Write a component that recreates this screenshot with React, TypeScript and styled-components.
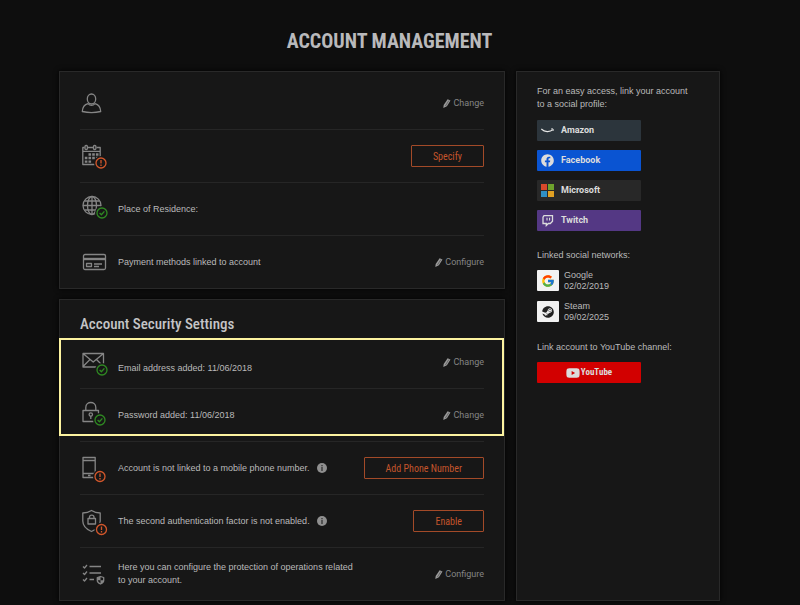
import React from "react";
import styled, { createGlobalStyle } from "styled-components";
import { FaFacebook, FaSteam, FaYoutube } from "react-icons/fa";
import { FcGoogle } from "react-icons/fc";

const GlobalStyle = createGlobalStyle`
  *, *::before, *::after { box-sizing: border-box; }
  body {
    margin: 0;
    background: #0e0e0e;
    color: #bababa;
    font: 9px/13px "Liberation Sans", Arial, sans-serif;
  }
  h1, h2, p { margin: 0; }
`;

const Page = styled.div`
  padding: 28px 80px 4px 59px;
`;

const Title = styled.h1`
  font: 700 20px/26px "Roboto Condensed", "Liberation Sans Narrow", sans-serif;
  text-align: center;
  text-transform: uppercase;
  color: #b9b9bb;
  margin-bottom: 17px;
`;

const Columns = styled.div`
  display: grid;
  grid-template-columns: minmax(0, 1fr) 204px;
  gap: 11px;
`;

const Stack = styled.main`
  display: flex;
  flex-direction: column;
  gap: 10px;
`;

const Card = styled.section`
  background: #171717;
  border: 1px solid #292929;
  box-shadow: 0 0 5px #000;
  padding: 5px 20px 0;
`;

const Side = styled(Card).attrs({ as: "aside" })`
  padding: 13px 20px;
`;

const SideIntro = styled.p`
  max-width: 158px;
`;

const CardTitle = styled.h2`
  font: 500 15px/18px "Roboto Condensed", "Liberation Sans Narrow", sans-serif;
  color: #c4c4c6;
  padding: 10px 0 3px;
`;

const Group = styled.div<{ $marked?: boolean }>`
  position: relative;
  &::after {
    content: "";
    display: ${(p) => (p.$marked ? "block" : "none")};
    position: absolute;
    inset: 2px -20px 6px -21px;
    border: 2px solid #fcf3a0;
    pointer-events: none;
  }
`;

const Row = styled.div<{ $last?: boolean }>`
  display: flex;
  align-items: center;
  height: ${(p) => (p.$last ? "52px" : "53px")};
  border-bottom: ${(p) => (p.$last ? "0" : "1px solid #262626")};
`;

const RowIcon = styled.svg`
  flex: none;
  width: 28px;
  height: 30px;
  margin-right: 10px;
  fill: none;
  stroke: #858585;
  stroke-width: 1.3;
  stroke-linejoin: round;
`;

const RowText = styled.p<{ $lowered?: boolean }>`
  display: flex;
  align-items: ${(p) => (p.$lowered ? "flex-end" : "center")};
  min-height: 26px;
  max-width: 244px;
  margin-right: auto;
  gap: 7px;
`;

const EditButton = styled.button`
  display: flex;
  align-items: center;
  gap: 2px;
  padding: 0;
  border: 0;
  background: none;
  color: #858585;
  font: 9px/13px Roboto, sans-serif;
  cursor: pointer;
`;

const ActionButton = styled.button`
  height: 22px;
  padding: 0 21px;
  border: 1px solid #a34a28;
  border-radius: 1px;
  background: none;
  color: #c4552c;
  font: 10px/13px "Roboto Condensed", "Liberation Sans Narrow", sans-serif;
  cursor: pointer;
`;

const InfoDot = styled.svg`
  flex: none;
  width: 10px;
  height: 10px;
`;

const ButtonList = styled.div`
  display: flex;
  flex-direction: column;
  align-items: flex-start;
  gap: 9px;
  margin: 9px 0 18px;
`;

const SocialButton = styled.button<{ $color: string }>`
  display: flex;
  align-items: center;
  gap: 7px;
  width: 104px;
  height: 21px;
  padding: 0 4px;
  border: 0;
  border-radius: 1px;
  background: ${(p) => p.$color};
  color: #dcdcdc;
  font: 700 9px/13px Roboto, sans-serif;
  cursor: pointer;
`;

const YouTubeButton = styled(SocialButton)`
  justify-content: center;
  gap: 1px;
  margin-top: 8px;
  font: 700 9px/13px "Roboto Condensed", "Liberation Sans Narrow", sans-serif;
`;

const LinkedList = styled.div`
  display: flex;
  flex-direction: column;
  gap: 9px;
  margin: 8px 0 18px;
`;

const Linked = styled.div`
  display: flex;
  gap: 5px;
  line-height: 11px;
`;

const Tile = styled.span`
  display: flex;
  align-items: center;
  justify-content: center;
  width: 22px;
  height: 21px;
  border-radius: 1px;
  background: #f2f2f2;
  color: #222;
`;

const Alert = ({ x, y }: { x: number; y: number }) => (
  <g stroke="#d3572b">
    <circle cx={x} cy={y} r="7" fill="#171717" stroke="none" />
    <circle cx={x} cy={y} r="5" />
    <path d={`M${x} ${y - 3}v3.6M${x} ${y + 1.6}v1.3`} />
  </g>
);

const Check = ({ x, y }: { x: number; y: number }) => (
  <g stroke="#2f8a22">
    <circle cx={x} cy={y} r="7" fill="#171717" stroke="none" />
    <circle cx={x} cy={y} r="5" />
    <path d={`M${x - 2.4} ${y}l1.8 1.8l3-3.4`} />
  </g>
);

const Icon = ({ children }: { children: React.ReactNode }) => (
  <RowIcon viewBox="0 0 28 30" aria-hidden="true">
    {children}
  </RowIcon>
);

const UserIcon = () => (
  <Icon>
    <ellipse cx="11.5" cy="11" rx="4.2" ry="5" />
    <path d="M8 15.600C4.500 16.500 2.500 19.500 2.300 23.500C8 24.800 15 24.800 20.700 23.500C20.500 19.500 18.500 16.500 15 15.600C13 18 10 18 8 15.600Z" />
  </Icon>
);

const CalendarIcon = () => (
  <Icon>
    <path d="M4.500 6.500H2.800V23.500H15M7.500 6.500H13M16.500 6.500H20.200V17M2.800 10.300H20.200" />
    <rect x="5" y="4.500" width="2.400" height="4" rx="1" />
    <rect x="13.500" y="4.500" width="2.400" height="4" rx="1" />
    <path strokeWidth="2.400" strokeDasharray="2.600 1.100" d="M8.500 13.500H18.800M4.800 17H18.800M4.800 20.600H12" />
    <Alert x={21} y={22} />
  </Icon>
);

const GlobeIcon = () => (
  <Icon>
    <circle cx="12" cy="11.500" r="9" />
    <ellipse cx="12" cy="11.500" rx="4.500" ry="9" />
    <path d="M12 2.500V20.500M3 11.500H21M4.500 7H19.500M4.500 16H19.500" />
    <Check x={22} y={19} />
  </Icon>
);

const CardIcon = () => (
  <Icon>
    <rect x="3.500" y="7.500" width="22" height="15" rx="1.500" />
    <path strokeWidth="2.400" d="M3.500 12H25.500" />
    <rect x="6.500" y="16.500" width="5" height="3" />
    <path d="M14 17H22M14 19.500H19" />
  </Icon>
);

const MailIcon = () => (
  <Icon>
    <path d="M3 6.500H23.500V20H3ZM3 6.500L13.200 15L23.500 6.500M3 19.500L10 12.500M23.500 19.500L16.500 12.500" />
    <Check x={22} y={23} />
  </Icon>
);

const LockIcon = () => (
  <Icon>
    <path d="M3 10.500H18.500V21.500H3ZM5.800 10.500V7.500C5.800 0.800 15.800 0.800 15.800 7.500V10.500" />
    <circle cx="10.800" cy="14.500" r="1.700" />
    <path d="M10.800 16V19" />
    <Check x={20} y={20} />
  </Icon>
);

const PhoneIcon = () => (
  <Icon>
    <path d="M3 4.500H15.200V24.500H3ZM3 7.500H15.200M3 20.500H15.200M8 22.500H10.500" />
    <Alert x={20} y={23.500} />
  </Icon>
);

const ShieldIcon = () => (
  <Icon>
    <path d="M11.500 4.500C14.500 6.500 17 7 20.200 7V15C20.200 20 16 23.500 11.500 25.500C7 23.500 2.800 20 2.800 15V7C6 7 8.500 6.500 11.500 4.500Z" />
    <path d="M8 12.500H15.500V18H8ZM9.500 12.500V11C9.500 8.500 14 8.500 14 11V12.500" />
    <Alert x={21.500} y={23.500} />
  </Icon>
);

const ChecklistIcon = () => (
  <Icon>
    <path d="M3 7.500l1.500 1.500l2.500-3M9.500 7.500H21M3 14l1.500 1.500l2.500-3M9.500 14H21M3 20.500l1.500 1.500l2.500-3M9.500 20.500H14" />
    <path d="M20.500 17.500L23.700 18.500V21.500C23.700 23 22 24.300 20.500 25C19 24.300 17.300 23 17.300 21.500V18.500Z" />
    <path fill="#858585" stroke="none" d="M20.500 17.500V21.300H17.300V18.500ZM20.500 21.300H23.700C23.500 23 22 24.300 20.500 25Z" />
  </Icon>
);

const Pencil = () => (
  <svg width="8" height="9" viewBox="0 0 8 9" aria-hidden="true">
    <path fill="#9a9a9a" d="M4.600 0.300L7.500 1.400L3.900 7.300L0.300 9L0.700 5.900Z" />
    <path stroke="#171717" strokeWidth="0.400" d="M5.900 1.500L2.400 7" />
  </svg>
);

const Info = () => (
  <InfoDot viewBox="0 0 9 9" role="img" aria-label="More information">
    <circle cx="4.500" cy="4.500" r="4.500" fill="#8f8f8f" />
    <path stroke="#333" strokeWidth="1.200" d="M4.500 1.700V2.900M4.500 3.600V7.200" />
  </InfoDot>
);

const AmazonSmile = () => (
  <svg width="13" height="13" viewBox="0 0 13 13" fill="none" stroke="#e6e6e6" aria-hidden="true">
    <path strokeWidth="1.200" d="M0.300 5C3.500 8.300 9 8.300 12 5.600" />
    <path strokeWidth="0.900" d="M10 5.100C11.500 4.500 13 4.500 12 7" />
  </svg>
);

const TwitchLogo = () => (
  <svg width="13" height="13" viewBox="0 0 13 13" fill="none" stroke="#dcdcdc" aria-hidden="true">
    <path strokeWidth="1.300" d="M3 1.700H11.500V7.300L9.300 9.500H7.300L5.300 11.500V9.500H2V3.200Z" />
    <path strokeWidth="1.100" d="M6 3.800V6.600M8.600 3.800V6.600" />
  </svg>
);

const MicrosoftLogo = () => (
  <svg width="13" height="13" viewBox="0 0 13 13" aria-hidden="true">
    <path fill="#d8492b" d="M0 0H6V6H0Z" />
    <path fill="#6ea32c" d="M7 0H13V6H7Z" />
    <path fill="#2f8fc4" d="M0 7H6V13H0Z" />
    <path fill="#dfa023" d="M7 7H13V13H7Z" />
  </svg>
);

const Edit = ({ label }: { label: string }) => (
  <EditButton type="button">
    <Pencil />
    {label}
  </EditButton>
);

export default function App() {
  return (
    <>
      <GlobalStyle />
      <Page>
        <Title>Account Management</Title>
        <Columns>
          <Stack>
            <Card>
              <Row>
                <UserIcon />
                <RowText />
                <Edit label="Change" />
              </Row>
              <Row>
                <CalendarIcon />
                <RowText />
                <ActionButton type="button">Specify</ActionButton>
              </Row>
              <Row>
                <GlobeIcon />
                <RowText>Place of Residence:</RowText>
              </Row>
              <Row $last>
                <CardIcon />
                <RowText>Payment methods linked to account</RowText>
                <Edit label="Configure" />
              </Row>
            </Card>
            <Card>
              <CardTitle>Account Security Settings</CardTitle>
              <Group $marked>
                <Row>
                  <MailIcon />
                  <RowText $lowered>Email address added: 11/06/2018</RowText>
                  <Edit label="Change" />
                </Row>
                <Row>
                  <LockIcon />
                  <RowText>Password added: 11/06/2018</RowText>
                  <Edit label="Change" />
                </Row>
              </Group>
              <Row>
                <PhoneIcon />
                <RowText>
                  Account is not linked to a mobile phone number.
                  <Info />
                </RowText>
                <ActionButton type="button">Add Phone Number</ActionButton>
              </Row>
              <Row>
                <ShieldIcon />
                <RowText>
                  The second authentication factor is not enabled.
                  <Info />
                </RowText>
                <ActionButton type="button">Enable</ActionButton>
              </Row>
              <Row $last>
                <ChecklistIcon />
                <RowText>Here you can configure the protection of operations related to your account.</RowText>
                <Edit label="Configure" />
              </Row>
            </Card>
          </Stack>
          <Side>
            <SideIntro>For an easy access, link your account to a social profile:</SideIntro>
            <ButtonList>
              <SocialButton type="button" $color="#2c353c">
                <AmazonSmile />
                Amazon
              </SocialButton>
              <SocialButton type="button" $color="#0a54d2">
                <FaFacebook size={13} />
                Facebook
              </SocialButton>
              <SocialButton type="button" $color="#282828">
                <MicrosoftLogo />
                Microsoft
              </SocialButton>
              <SocialButton type="button" $color="#543884">
                <TwitchLogo />
                Twitch
              </SocialButton>
            </ButtonList>
            <p>Linked social networks:</p>
            <LinkedList>
              <Linked>
                <Tile>
                  <FcGoogle size={14} />
                </Tile>
                <div>
                  Google
                  <br />
                  02/02/2019
                </div>
              </Linked>
              <Linked>
                <Tile>
                  <FaSteam size={12} />
                </Tile>
                <div>
                  Steam
                  <br />
                  09/02/2025
                </div>
              </Linked>
            </LinkedList>
            <p>Link account to YouTube channel:</p>
            <YouTubeButton type="button" $color="#d20000">
              <FaYoutube size={14} />
              YouTube
            </YouTubeButton>
          </Side>
        </Columns>
      </Page>
    </>
  );
}
